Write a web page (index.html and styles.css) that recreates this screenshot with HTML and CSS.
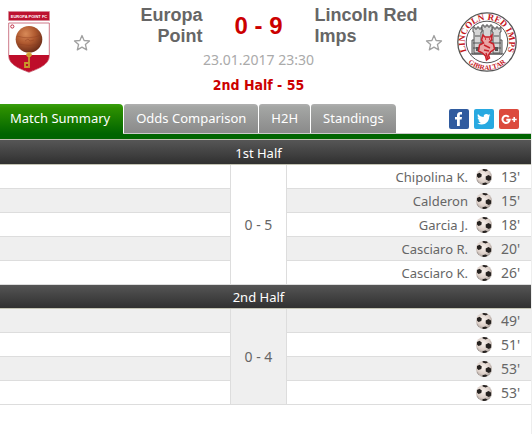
FILE: index.html
```html
<!DOCTYPE html>
<html lang="en">
<head>
<meta charset="utf-8">
<title>Europa Point - Lincoln Red Imps</title>
<link rel="stylesheet" href="styles.css">
</head>
<body>
<svg class="defs" aria-hidden="true">
  <defs>
    <radialGradient id="ball-shade" cx="45%" cy="40%" r="60%">
      <stop offset="0" stop-color="#f8f1ec"/><stop offset=".65" stop-color="#dccfc8"/><stop offset="1" stop-color="#a39a95"/>
    </radialGradient>
    <clipPath id="ball-clip"><circle cx="8" cy="8" r="8"/></clipPath>
    <symbol id="ball" viewBox="0 0 16 16">
      <circle cx="8" cy="8" r="8" fill="url(#ball-shade)"/>
      <g clip-path="url(#ball-clip)" fill="#25211f">
        <path d="M6.500 0h4.500l1 1.200-2.300 1.200-3-.9z"/>
        <path d="M1 5l2.500-1.200L5.800 5.500 5.300 8 2.500 9 1 7.500z"/>
        <path d="M9.700 7.500l2.800-1.500 2.500 1.500.2 3-2.400 1.500-3-1.500z"/>
        <path d="M6.500 14.300l3-.7 2 1L10 16H6.500z"/>
        <path d="M0 11l1.500.4 1.200 2.400L1.500 15z" opacity=".4"/>
      </g>
    </symbol>
    <symbol id="star" viewBox="0 0 18 18">
      <path d="M9 1.500l2.100 5 5.400.4-4.100 3.600 1.300 5.400L9 13.100l-4.700 2.800 1.300-5.400L1.500 6.900l5.400-.4z" fill="#fff" stroke="#a0a0a0" stroke-width="1.300" stroke-linejoin="round"/>
    </symbol>
  </defs>
</svg>
<main class="match">
  <header class="summary">
    <div class="side home">
      <svg class="crest-home" viewBox="0 0 42 62" role="img" aria-label="Europa Point FC crest">
        <defs>
          <radialGradient id="globe" cx="38%" cy="30%" r="70%">
            <stop offset="0" stop-color="#d88a58"/><stop offset=".5" stop-color="#b05a30"/><stop offset="1" stop-color="#70301a"/>
          </radialGradient>
        </defs>
        <path d="M.5.500h41v9H.500z" fill="#bd1230" stroke="#d58a96" stroke-width=".6"/>
        <text x="21" y="6.700" class="crest-name" text-anchor="middle">EUROPA POINT FC</text>
        <path d="M.7 12h40.600v33c0 9-12 13-20.300 16.300C12.700 58 .7 54 .7 45z" fill="#fff" stroke="#c76a7a" stroke-width=".9"/>
        <path d="M1 44h40v1c0 9-12 13-20 16C13 58 1 54 1 45z" fill="#be0d2a"/>
        <circle cx="4.300" cy="15.500" r="1.600" fill="none" stroke="#c02b43" stroke-width="1"/>
        <circle cx="21" cy="28.300" r="13.300" fill="url(#globe)"/>
        <path d="M9 25q12 4 24-1M10 33q11 3 22 0M17 30l3-2 2 2 4-1" fill="none" stroke="#8f3c20" stroke-width=".6" opacity=".7"/>
        <path d="M21 42v15M21 52h-4v4h3M18.500 44h5" fill="none" stroke="#c99a2c" stroke-width="1.800"/>
        <circle cx="21" cy="43.500" r="2" fill="none" stroke="#d3a336" stroke-width="1.200"/>
      </svg>
      <button class="fav" type="button" aria-label="Add Europa Point to favourites"><svg><use href="#star"/></svg></button>
      <h2 class="team">Europa Point</h2>
    </div>
    <p class="score">0 - 9</p>
    <div class="side away">
      <h2 class="team">Lincoln Red Imps</h2>
      <button class="fav" type="button" aria-label="Add Lincoln Red Imps to favourites"><svg><use href="#star"/></svg></button>
      <svg class="crest-away" viewBox="0 0 60 60" role="img" aria-label="Lincoln Red Imps crest">
        <defs>
          <path id="ring-top" d="M13 44.500A22.200 22.200 0 1 1 47 44.500"/>
          <path id="ring-bottom" d="M9 48.500A28 28 0 0 0 51 48.500"/>
        </defs>
        <circle cx="30" cy="30" r="29.200" fill="#fff" stroke="#555" stroke-width="1.300"/>
        <circle cx="30" cy="30" r="20.800" fill="#fff" stroke="#555" stroke-width="1"/>
        <text class="ring-text"><textPath href="#ring-top" startOffset="50%" text-anchor="middle">LINCOLN RED IMPS</textPath></text>
        <text class="ring-text small"><textPath href="#ring-bottom" startOffset="50%" text-anchor="middle">GIBRALTAR</textPath></text>
        <g fill="#d6d6d6" stroke="#555" stroke-width="1">
          <path d="M15 42V28h30v14z"/>
          <path d="M17 41V20h-1v-5h2v2h2v-2h2v2h2v-2h1v5h-1v21zM36 41V20h-1v-5h2v2h2v-2h2v2h2v-2h1v5h-1v21z"/>
          <path d="M26 38V18h-1v-5h2v2h2v-2h2v2h2v-2h2v5h-1v20z"/>
          <path d="M13 42h34M16 31h28M18 24h5M37 24h5M16 36h28" fill="none"/>
        </g>
        <path d="M19 39v-4h3v4zM38 39v-4h3v4z" fill="#555"/>
        <path d="M26 23l2 2h5l2-2-.5 5-2 2 4 2 1 5-4 3-2 3 1 3-3 2-1-4-3-3-4-2 1-6 4-2-2-3z" fill="#eaa5a5" stroke="#c9202a" stroke-width="1.500"/>
        <path d="M27 33l6 3M28 27h1M32 27h1M27 38l5 1M29 41l2 6" stroke="#c9202a" stroke-width="1.400"/>
      </svg>
    </div>
    <p class="date">23.01.2017 23:30</p>
    <p class="status">2nd Half - 55</p>
  </header>

  <nav class="tabs">
    <a class="tab active" href="#summary">Match Summary</a>
    <a class="tab" href="#odds">Odds Comparison</a>
    <a class="tab" href="#h2h">H2H</a>
    <a class="tab" href="#standings">Standings</a>
    <div class="social">
      <a href="#facebook" aria-label="Facebook"><svg viewBox="0 0 20 20"><rect width="20" height="20" rx="2" fill="#305b9f"/><path d="M8 17v-6.500H6V8h2V6.500C8 4.200 9.200 3 11.200 3H13v2.600h-1.200c-.8 0-1 .4-1 1.100V8H13l-.4 2.500h-1.800V17z" fill="#fff"/></svg></a>
      <a href="#twitter" aria-label="Twitter"><svg viewBox="0 0 20 20"><rect width="20" height="20" rx="2" fill="#28a9e1"/><path d="M16.500 6.200l-1.500.5 1.200-1.500-1.700.6C12.300 3.900 9.300 5.300 9.700 8 7.400 7.900 5.400 6.800 4 5c-.8 1.300-.4 3 .8 3.900l-1.200-.3c0 1.300.9 2.400 2.100 2.700l-1.200.1c.4 1.100 1.300 1.800 2.500 1.900-1.100.8-2.400 1.200-3.700 1 5.300 3.200 12 .2 11.900-6.700z" fill="#fff"/></svg></a>
      <a href="#google-plus" aria-label="Google+"><svg viewBox="0 0 20 20"><rect width="20" height="20" rx="2" fill="#dc4a3d"/><path d="M9.800 8A3.600 3.600 0 1 0 10.700 10.700H7.300" fill="none" stroke="#fff" stroke-width="2"/><path d="M15.200 8v5M12.700 10.500h5" stroke="#fff" stroke-width="1.600"/></svg></a>
    </div>
  </nav>

  <table class="events">
    <colgroup><col class="left"><col class="mid"><col></colgroup>
    <tbody>
      <tr><th colspan="3" scope="rowgroup">1st Half</th></tr>
      <tr><td></td><td class="half" rowspan="5">0 - 5</td><td><div class="event">Chipolina K.<svg><use href="#ball"/></svg><span class="min">13'</span></div></td></tr>
      <tr class="alt"><td></td><td><div class="event">Calderon<svg><use href="#ball"/></svg><span class="min">15'</span></div></td></tr>
      <tr><td></td><td><div class="event">Garcia J.<svg><use href="#ball"/></svg><span class="min">18'</span></div></td></tr>
      <tr class="alt"><td></td><td><div class="event">Casciaro R.<svg><use href="#ball"/></svg><span class="min">20'</span></div></td></tr>
      <tr><td></td><td><div class="event">Casciaro K.<svg><use href="#ball"/></svg><span class="min">26'</span></div></td></tr>
    </tbody>
    <tbody>
      <tr><th colspan="3" scope="rowgroup">2nd Half</th></tr>
      <tr class="alt"><td></td><td class="half" rowspan="4">0 - 4</td><td><div class="event"><svg><use href="#ball"/></svg><span class="min">49'</span></div></td></tr>
      <tr><td></td><td><div class="event"><svg><use href="#ball"/></svg><span class="min">51'</span></div></td></tr>
      <tr class="alt"><td></td><td><div class="event"><svg><use href="#ball"/></svg><span class="min">53'</span></div></td></tr>
      <tr><td></td><td><div class="event"><svg><use href="#ball"/></svg><span class="min">53'</span></div></td></tr>
    </tbody>
  </table>
</main>
</body>
</html>
```
FILE: styles.css
```css
* { box-sizing: border-box; }
body {
  margin: 0;
  background: #fff;
  color: #666;
  font: 13px/20px Tahoma, "Noto Sans", sans-serif;
}
h2, p { margin: 0; }
.defs { position: absolute; width: 0; height: 0; }
.match { min-height: 100vh; border-right: 1px solid #eee; }

.summary {
  display: grid;
  grid-template-columns: 1fr 112px 1fr;
  grid-template-rows: 44px 22px 1fr;
  padding: 5px 14px 0 0;
  text-align: center;
}
.side {
  display: flex;
  align-items: flex-start;
  grid-row: 1 / 4;
  height: 99px;
}
.home { grid-column: 1; padding-left: 8px; }
.away { grid-column: 3; }
.team {
  flex: 1;
  font: bold 18px/21px Arial, "Liberation Sans", sans-serif;
  color: #666;
}
.home .team { text-align: right; padding-left: 8px; }
.away .team { text-align: left; }
.crest-home { width: 42px; height: 62px; margin-top: 6px; }
.crest-away { width: 60px; height: 60px; margin-top: 7px; }
.crest-name { font: bold 4px "Liberation Sans", sans-serif; fill: #fff; }
.ring-text { font: bold 9px "Liberation Serif", serif; fill: #c4161c; }
.ring-text.small { font-size: 7px; }
.fav {
  width: 18px;
  height: 18px;
  margin-top: 29px;
  padding: 0;
  border: 0;
  background: none;
  cursor: pointer;
}
.home .fav { margin-left: 23px; }
.away .fav { margin-right: 14px; }
.fav svg { display: block; width: 18px; height: 18px; }
.score {
  grid-column: 2;
  grid-row: 1;
  font: bold 24px/42px Arial, "Liberation Sans", sans-serif;
  color: #c00;
}
.date, .status { grid-column: 2; white-space: nowrap; }
.date { grid-row: 2; font-size: 14px; line-height: 22px; color: #aaa; }
.status {
  grid-row: 3;
  font: bold 14px/28px Tahoma, "DejaVu Sans Condensed", "Noto Sans", sans-serif;
  color: #c00;
}

.tabs {
  display: flex;
  align-items: flex-start;
  gap: 1px;
  height: 36px;
  background: linear-gradient(#ccc 0 1px, #006400 1px 6px, #c0c0b0 6px) bottom / 100% 7px no-repeat;
}
.tab {
  height: 29px;
  padding: 0 12px;
  border-radius: 3px 4px 0 0;
  background: linear-gradient(#b0b0b0, #a4a6a4 3px, #8a8a8a);
  color: #fff;
  line-height: 28px;
  text-decoration: none;
  white-space: nowrap;
}
.tab.active {
  height: 35px;
  padding: 0 13px 0 10px;
  border-radius: 0 4px 0 0;
  background: linear-gradient(#3aa010, #2d9000 4px, #006400 30px);
}
.social { display: flex; gap: 5px; margin: 5px 12px 0 auto; }
.social a, .social svg { display: block; width: 20px; height: 20px; }

.events {
  width: 100%;
  table-layout: fixed;
  border-spacing: 0;
  border-top: 1px solid #555;
}
.left { width: 43.3%; }
.mid { width: 57px; }
.events th, .events td { height: 24px; padding: 0; }
.events th {
  padding-right: 14px;
  border-bottom: 1px solid #c4c4b4;
  background: linear-gradient(#555, #303030);
  color: #fff;
  font-weight: normal;
}
.events td { border-bottom: 1px solid #ddd; }
.alt td { background: #efefef; }
.events .half {
  border-left: 1px solid #ddd;
  border-right: 1px solid #ddd;
  font-size: 14px;
  text-align: center;
}
.event { display: flex; align-items: center; justify-content: flex-end; }
.event svg { width: 16px; height: 16px; margin: 0 9px 0 8px; }
.min { width: 30px; font-size: 14px; }
```
